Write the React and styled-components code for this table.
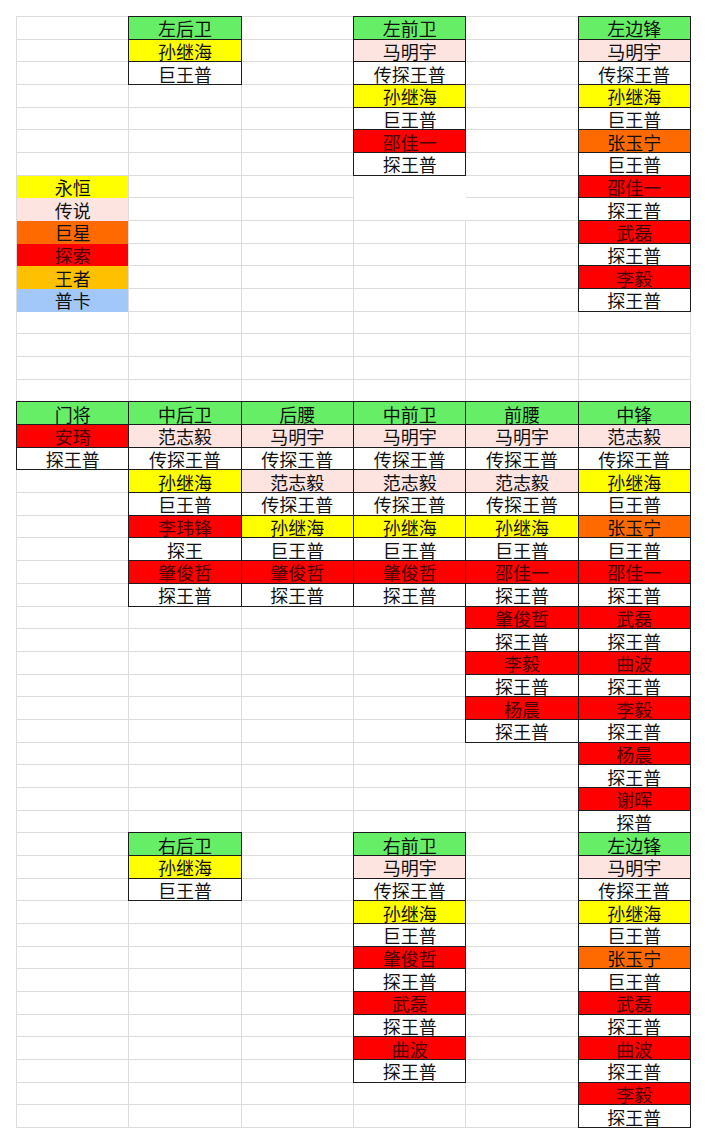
import React from 'react';
import styled, { createGlobalStyle } from 'styled-components';

const COLS = 6;
const ROWS = 49;

const FILL = {
  G: '#66ee66',
  Y: '#ffff00',
  P: '#fde4e1',
  O: '#ff6a00',
  R: '#ff0000',
  K: '#ffc000',
  B: '#a2c8fa',
  W: '#ffffff',
};

const block = (col, row, list) => ({ col, row, list });

// each item: "text:fillKey"
const blocks = [
  block(1, 0, ['左后卫:G', '孙继海:Y', '巨王普:W']),
  block(3, 0, ['左前卫:G', '马明宇:P', '传探王普:W', '孙继海:Y', '巨王普:W', '邵佳一:R', '探王普:W']),
  block(5, 0, [
    '左边锋:G', '马明宇:P', '传探王普:W', '孙继海:Y', '巨王普:W', '张玉宁:O', '巨王普:W',
    '邵佳一:R', '探王普:W', '武磊:R', '探王普:W', '李毅:R', '探王普:W',
  ]),
  block(0, 17, ['门将:G', '安琦:R', '探王普:W']),
  block(1, 17, ['中后卫:G', '范志毅:P', '传探王普:W', '孙继海:Y', '巨王普:W', '李玮锋:R', '探王:W', '肇俊哲:R', '探王普:W']),
  block(2, 17, ['后腰:G', '马明宇:P', '传探王普:W', '范志毅:P', '传探王普:W', '孙继海:Y', '巨王普:W', '肇俊哲:R', '探王普:W']),
  block(3, 17, ['中前卫:G', '马明宇:P', '传探王普:W', '范志毅:P', '传探王普:W', '孙继海:Y', '巨王普:W', '肇俊哲:R', '探王普:W']),
  block(4, 17, [
    '前腰:G', '马明宇:P', '传探王普:W', '范志毅:P', '传探王普:W', '孙继海:Y', '巨王普:W', '邵佳一:R',
    '探王普:W', '肇俊哲:R', '探王普:W', '李毅:R', '探王普:W', '杨晨:R', '探王普:W',
  ]),
  block(5, 17, [
    '中锋:G', '范志毅:P', '传探王普:W', '孙继海:Y', '巨王普:W', '张玉宁:O', '巨王普:W', '邵佳一:R',
    '探王普:W', '武磊:R', '探王普:W', '曲波:R', '探王普:W', '李毅:R', '探王普:W', '杨晨:R',
    '探王普:W', '谢晖:R', '探普:W',
  ]),
  block(1, 36, ['右后卫:G', '孙继海:Y', '巨王普:W']),
  block(3, 36, ['右前卫:G', '马明宇:P', '传探王普:W', '孙继海:Y', '巨王普:W', '肇俊哲:R', '探王普:W', '武磊:R', '探王普:W', '曲波:R', '探王普:W']),
  block(5, 36, [
    '左边锋:G', '马明宇:P', '传探王普:W', '孙继海:Y', '巨王普:W', '张玉宁:O', '巨王普:W',
    '武磊:R', '探王普:W', '曲波:R', '探王普:W', '李毅:R', '探王普:W',
  ]),
];

const legend = ['永恒:Y', '传说:P', '巨星:O', '探索:R', '王者:K', '普卡:B'];

function buildSheet() {
  const sheet = Array.from({ length: ROWS }, () => Array.from({ length: COLS }, () => null));
  blocks.forEach(({ col, row, list }) => {
    list.forEach((item, i) => {
      const [text, key] = item.split(':');
      sheet[row + i][col] = { text, key, boxed: true };
    });
  });
  legend.forEach((item, i) => {
    const [text, key] = item.split(':');
    sheet[7 + i][0] = { text, key, boxed: false, legend: true };
  });
  // merged blank area under the 左前卫 list
  sheet[7][3] = { text: '', key: 'W', merged: true };
  sheet[8][3] = 'skip';
  return sheet;
}

const GlobalStyle = createGlobalStyle`
  html, body {
    margin: 0;
    background: #ffffff;
  }
  body {
    font-family: "Noto Sans CJK SC", "Noto Sans", sans-serif;
  }
`;

const Page = styled.div`
  padding: 16px 0 0 16px;
`;

const Sheet = styled.div`
  display: grid;
  grid-template-columns: repeat(${COLS}, 1fr);
  grid-template-rows: repeat(${ROWS}, 1fr);
  gap: 1px;
  width: 675px;
  height: 1112px;
  box-sizing: border-box;
  border: 1px solid #dcdcdc;
  background: #dcdcdc;
`;

const Cell = styled.div`
  display: flex;
  align-items: center;
  justify-content: center;
  background: ${p => FILL[p.$fill] || '#ffffff'};
  color: ${p => (p.$fill === 'R' ? '#4a0000' : '#111111')};
  font-size: 18px;
  line-height: 20px;
  padding-top: 1px;
  white-space: nowrap;
  overflow: visible;
  grid-row: ${p => (p.$merged ? 'span 2' : 'auto')};
  box-shadow: ${p =>
    p.$boxed
      ? '0 0 0 1px #1c1c1c'
      : p.$legend
      ? `0 1px 0 0 ${FILL[p.$fill]}`
      : p.$merged
      ? '1px 0 0 0 #ffffff'
      : 'none'};
`;

export default function App() {
  const sheet = buildSheet();
  return (
    <Page>
      <GlobalStyle />
      <Sheet>
        {sheet.flatMap((row, r) =>
          row.map((cell, c) => {
            if (cell === 'skip') return null;
            if (!cell) return <Cell key={`${r}-${c}`} />;
            return (
              <Cell
                key={`${r}-${c}`}
                $fill={cell.key}
                $boxed={cell.boxed}
                $legend={cell.legend}
                $merged={cell.merged}
              >
                {cell.text}
              </Cell>
            );
          })
        )}
      </Sheet>
    </Page>
  );
}
